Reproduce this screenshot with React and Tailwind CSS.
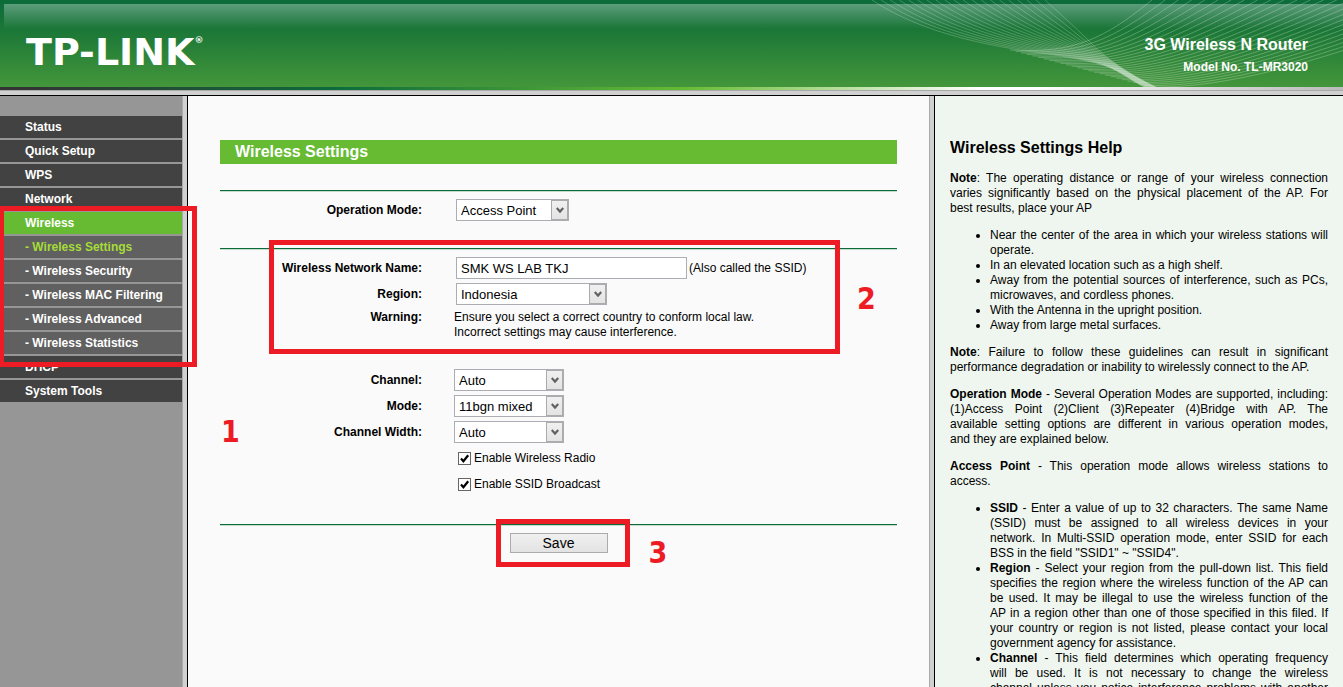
import React, { useState } from 'react';

const MENU_TOP = ['Status', 'Quick Setup', 'WPS', 'Network'];
const MENU_WIRELESS = [
  'Wireless Settings',
  'Wireless Security',
  'Wireless MAC Filtering',
  'Wireless Advanced',
  'Wireless Statistics',
];
const MENU_BOTTOM = ['DHCP', 'System Tools'];

const PLACEMENT_TIPS = [
  'Near the center of the area in which your wireless stations will operate.',
  'In an elevated location such as a high shelf.',
  'Away from the potential sources of interference, such as PCs, microwaves, and cordless phones.',
  'With the Antenna in the upright position.',
  'Away from large metal surfaces.',
];

function Waves() {
  const down = Array.from({ length: 20 }, (_, i) => {
    const t = i / 19;
    return `M${12 + 173 * t} 0C${50 + 147 * t} ${25 - 14 * t} ${100 + 113 * t} ${42 - 17 * t} ${180 + 50 * t} ${53 - 11 * t}S${250 + 18 * t} ${69 + 5 * t} ${286 + 12 * t} 88`;
  });
  const up = Array.from({ length: 26 }, (_, i) => {
    const t = i / 25;
    return `M${150 + 140 * t} ${50 + 37 * t}C${215 + 140 * t} ${54 + 34 * t} ${245 + 195 * t} ${38 + 34 * t} ${292 + 330 * t} 0`;
  });
  return (
    <svg className="absolute right-0 top-0" width="483" height="87" viewBox="0 0 483 87" fill="none" stroke="white" aria-hidden="true">
      <g strokeOpacity="0.22">
        {down.map((d) => <path key={d} d={d} />)}
      </g>
      <g strokeOpacity="0.25">
        {up.map((d) => <path key={d} d={d} />)}
      </g>
    </svg>
  );
}

function Header() {
  return (
    <header className="shrink-0">
      <div className="relative h-[87px] overflow-hidden bg-[linear-gradient(#0b6b3a_0px,#1b7737_30px,#43963a_87px)] text-white">
        <div className="absolute left-1 right-0 top-1 h-[25px] bg-linear-to-b from-white/33 to-white/0" />
        <Waves />
        <div className="relative flex h-full items-center justify-between pl-[26px] pr-[35px] pt-4">
          <a href="#home" className="flex items-start font-['DejaVu_Sans'] text-[38px] leading-9 font-bold">
            TP-LINK<span className="text-[9px] leading-3">®</span>
          </a>
          <div className="pt-1.5 text-right font-bold">
            <div className="text-base leading-6">3G Wireless N Router</div>
            <div className="text-xs leading-5">Model No. TL-MR3020</div>
          </div>
        </div>
      </div>
      <div className="h-[3px] bg-[linear-gradient(to_right,#333_0%,#333_2%,#0c6b3b_25%,#66bb33_51%,#fff_73%,#fff_77%,#bbb_100%)]" />
      <div className="h-1.5 border-t border-b border-t-[#a9a9a9] border-b-black bg-[#d0d0d0]" />
    </header>
  );
}

function FrameBar() {
  return <div className="border-l border-r border-l-[#a9a9a9] border-r-black bg-[#d0d0d0]" />;
}

function MenuItem({ label, className }) {
  return (
    <li>
      <a href="#menu" className={`block h-[22px] pl-[25px] leading-[22px] ${className}`}>{label}</a>
    </li>
  );
}

function Marker({ className }) {
  return <div className={`pointer-events-none absolute z-10 border-5 border-[#ed1c24] ${className}`} />;
}

function Step({ n, className }) {
  return (
    <span className={`absolute font-['DejaVu_Sans_Condensed','DejaVu_Sans',sans-serif] text-3xl leading-8 font-bold text-[#ed1c24] ${className}`}>{n}</span>
  );
}

function Sidebar() {
  return (
    <nav className="bg-[#969696] pt-5 font-bold text-white">
      <ul className="flex flex-col gap-0.5">
        {MENU_TOP.map((m) => <MenuItem key={m} label={m} className="bg-[#424242]" />)}
        <li className="relative">
          <Marker className="-right-[15px] -bottom-[13px] -left-px -top-1.5" />
          <a href="#wireless" className="block h-[22px] bg-[#66bb33] pl-[25px] leading-[22px]">Wireless</a>
          <ul className="mt-0.5 flex flex-col gap-0.5">
            {MENU_WIRELESS.map((m, i) => (
              <MenuItem key={m} label={`- ${m}`} className={i === 0 ? 'bg-[#606060] text-[#a5dc38]' : 'bg-[#606060]'} />
            ))}
          </ul>
        </li>
        {MENU_BOTTOM.map((m) => <MenuItem key={m} label={m} className="bg-[#424242]" />)}
      </ul>
    </nav>
  );
}

function Rule() {
  return <div className="h-0.5 border-t border-[#0c6b3b] bg-[#c5dccd]" />;
}

function Row({ label, htmlFor, children }) {
  return (
    <div className="grid min-h-[26px] grid-cols-[202px_1fr] items-center gap-x-8">
      <label htmlFor={htmlFor} className="text-right font-bold">{label}</label>
      <div className="flex items-center">{children}</div>
    </div>
  );
}

function Select({ id, options, className }) {
  return (
    <div className={`relative h-[22px] ${className}`}>
      <select id={id} className="h-full w-full appearance-none border border-[#abadb3] bg-white pl-1 pr-5 text-[13px] outline-none">
        {options.map((o) => <option key={o}>{o}</option>)}
      </select>
      <span className="pointer-events-none absolute inset-y-px right-px flex w-[17px] items-center justify-center border border-[#ababab] bg-linear-to-b from-[#f0f0f0] to-[#e3e3e3]">
        <svg width="8" height="7" viewBox="0 0 8 7" fill="none" stroke="#606060" strokeWidth="2.2" aria-hidden="true">
          <path d="M0.7 1L4 4.6L7.3 1" />
        </svg>
      </span>
    </div>
  );
}

function CheckBox({ label, checked, onChange }) {
  return (
    <label className="flex h-[26px] items-center gap-[3px] pl-[238px]">
      <span className="relative block size-[13px]">
        <input type="checkbox" checked={checked} onChange={onChange} className="block size-[13px] appearance-none border border-[#666] bg-white" />
        {checked && (
          <svg className="pointer-events-none absolute inset-0" width="13" height="13" viewBox="0 0 13 13" fill="none" stroke="black" strokeWidth="2.2" aria-hidden="true">
            <path d="M3 6.5L5.4 9.2L10.2 3.2" />
          </svg>
        )}
      </span>
      {label}
    </label>
  );
}

function Settings() {
  const [ssid, setSsid] = useState('SMK WS LAB TKJ');
  const [radio, setRadio] = useState(true);
  const [broadcast, setBroadcast] = useState(true);

  return (
    <main className="bg-[#fafafa] px-8 pt-11">
      <h1 className="h-6 bg-[#66bb33] pl-[15px] text-base leading-6 font-bold text-white">Wireless Settings</h1>
      <form className="mt-[26px]" onSubmit={(e) => e.preventDefault()}>
        <Rule />
        <div className="pt-[5px] pb-[25px]">
          <Row label="Operation Mode:" htmlFor="opmode">
            <Select id="opmode" options={['Access Point', 'Client', 'Repeater', 'Bridge with AP']} className="ml-0.5 w-[113px]" />
          </Row>
        </div>
        <Rule />
        <div className="relative pt-[5px]">
          <Marker className="-top-2.5 left-[49px] h-[114px] w-[571px]" />
          <Step n="2" className="top-[33px] left-[637px]" />
          <Row label="Wireless Network Name:" htmlFor="ssid">
            <input id="ssid" type="text" value={ssid} onChange={(e) => setSsid(e.target.value)}
              className="mr-0.5 ml-0.5 h-[22px] w-[231px] border border-[#abadb3] bg-white px-1 text-[13px] outline-none" />
            <span>(Also called the SSID)</span>
          </Row>
          <Row label="Region:" htmlFor="region">
            <Select id="region" options={['Indonesia', 'Malaysia', 'Singapore']} className="ml-0.5 w-[151px]" />
          </Row>
          <div className="grid grid-cols-[202px_1fr] gap-x-8 pt-[3px]">
            <div className="text-right font-bold">Warning:</div>
            <p>
              Ensure you select a correct country to conform local law.<br />
              Incorrect settings may cause interference.
            </p>
          </div>
        </div>
        <div className="relative pt-[27px] pb-[27px]">
          <Step n="1" className="top-[76px] left-px" />
          <Row label="Channel:" htmlFor="channel">
            <Select id="channel" options={['Auto', '1', '6', '11']} className="w-[110px]" />
          </Row>
          <Row label="Mode:" htmlFor="mode">
            <Select id="mode" options={['11bgn mixed', '11bg mixed', '11n only']} className="w-[110px]" />
          </Row>
          <Row label="Channel Width:" htmlFor="width">
            <Select id="width" options={['Auto', '20MHz', '40MHz']} className="w-[110px]" />
          </Row>
          <CheckBox label="Enable Wireless Radio" checked={radio} onChange={(e) => setRadio(e.target.checked)} />
          <CheckBox label="Enable SSID Broadcast" checked={broadcast} onChange={(e) => setBroadcast(e.target.checked)} />
        </div>
        <Rule />
        <div className="flex justify-center pt-[7px]">
          <div className="relative">
            <Marker className="-left-3.5 -top-3.5 h-12 w-[134px]" />
            <Step n="3" className="top-1 left-[139px]" />
            <button type="submit" className="block h-5 w-[98px] border border-[#ababab] bg-linear-to-b from-[#f0f0f0] to-[#e3e3e3] text-sm leading-[18px]">
              Save
            </button>
          </div>
        </div>
      </form>
    </main>
  );
}

// one fully justified line of help text
function Line({ children }) {
  return <span className="block [text-align-last:justify]">{children}</span>;
}

function Help() {
  return (
    <aside className="overflow-hidden bg-[#eff6ef] px-[15px] pt-[43px] text-justify">
      <h2 className="mb-3.5 text-base leading-[18px] font-bold">Wireless Settings Help</h2>
      <div className="flex flex-col gap-3">
        <p>
          <Line><b>Note</b>: The operating distance or range of your wireless connection</Line>
          <Line>varies significantly based on the physical placement of the AP. For</Line>
          best results, place your AP
        </p>
        <ul className="list-disc pl-10">
          {PLACEMENT_TIPS.map((t) => <li key={t}>{t}</li>)}
        </ul>
        <p>
          <Line><b>Note</b>: Failure to follow these guidelines can result in significant</Line>
          performance degradation or inability to wirelessly connect to the AP.
        </p>
        <p>
          <Line><b>Operation Mode</b> - Several Operation Modes are supported, including:</Line>
          <Line>(1)Access Point (2)Client (3)Repeater (4)Bridge with AP. The</Line>
          <Line>available setting options are different in various operation modes,</Line>
          and they are explained below.
        </p>
        <p>
          <Line><b>Access Point</b> - This operation mode allows wireless stations to</Line>
          access.
        </p>
        <ul className="list-disc pl-10">
          <li>
            <Line><b>SSID</b> - Enter a value of up to 32 characters. The same Name</Line>
            <Line>(SSID) must be assigned to all wireless devices in your</Line>
            <Line>network. In Multi-SSID operation mode, enter SSID for each</Line>
            BSS in the field "SSID1" ~ "SSID4".
          </li>
          <li>
            <Line><b>Region</b> - Select your region from the pull-down list. This field</Line>
            <Line>specifies the region where the wireless function of the AP can</Line>
            <Line>be used. It may be illegal to use the wireless function of the</Line>
            <Line>AP in a region other than one of those specified in this filed. If</Line>
            <Line>your country or region is not listed, please contact your local</Line>
            government agency for assistance.
          </li>
          <li>
            <Line><b>Channel</b> - This field determines which operating frequency</Line>
            <Line>will be used. It is not necessary to change the wireless</Line>
            <Line>channel unless you notice interference problems with another</Line>
          </li>
        </ul>
      </div>
    </aside>
  );
}

export default function App() {
  return (
    <div className="flex h-screen flex-col overflow-hidden font-['Liberation_Sans',Arial,sans-serif] text-xs leading-[15px] text-black">
      <Header />
      <div className="grid min-h-0 flex-1 grid-cols-[182px_6px_minmax(0,741fr)_6px_minmax(0,408fr)]">
        <Sidebar />
        <FrameBar />
        <Settings />
        <FrameBar />
        <Help />
      </div>
    </div>
  );
}
